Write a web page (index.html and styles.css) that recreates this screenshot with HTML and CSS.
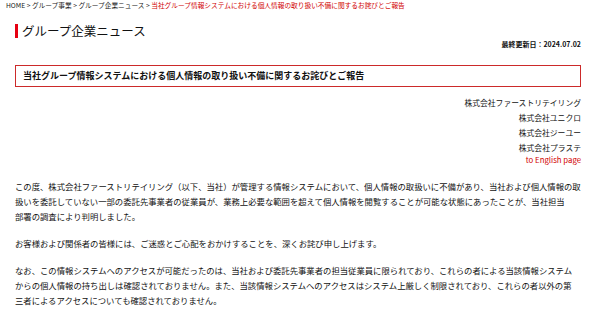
FILE: index.html
```html
<!DOCTYPE html>
<html lang="ja">
<head>
<meta charset="utf-8">
<title>グループ企業ニュース</title>
<link rel="stylesheet" href="styles.css">
</head>
<body>
<div class="breadcrumb">
  <a href="#">HOME</a> &gt; <a href="#">グループ事業</a> &gt; <a href="#">グループ企業ニュース</a> &gt; <span class="current">当社グループ情報システムにおける個人情報の取り扱い不備に関するお詫びとご報告</span>
</div>
<main class="page">
  <h1 class="title">グループ企業ニュース</h1>
  <p class="updated">最終更新日：2024.07.02</p>
  <h2 class="notice">当社グループ情報システムにおける個人情報の取り扱い不備に関するお詫びとご報告</h2>
  <ul class="companies">
    <li>株式会社ファーストリテイリング</li>
    <li>株式会社ユニクロ</li>
    <li>株式会社ジーユー</li>
    <li>株式会社プラステ</li>
  </ul>
  <p class="english"><a href="#">to English page</a></p>
  <div class="body">
    <p>この度、株式会社ファーストリテイリング（以下、当社）が管理する情報システムにおいて、個人情報の取扱いに不備があり、当社および個人情報の取<br>扱いを委託していない一部の委託先事業者の従業員が、業務上必要な範囲を超えて個人情報を閲覧することが可能な状態にあったことが、当社担当<br>部署の調査により判明しました。</p>
    <p>お客様および関係者の皆様には、ご迷惑とご心配をおかけすることを、深くお詫び申し上げます。</p>
    <p>なお、この情報システムへのアクセスが可能だったのは、当社および委託先事業者の担当従業員に限られており、これらの者による当該情報システム<br>からの個人情報の持ち出しは確認されておりません。また、当該情報システムへのアクセスはシステム上厳しく制限されており、これらの者以外の第<br>三者によるアクセスについても確認されておりません。</p>
  </div>
</main>
</body>
</html>
```
FILE: styles.css
```css
html, body {
  margin: 0;
  padding: 0;
  background: #fff;
}
body {
  font-family: "Noto Sans CJK JP", "Noto Sans", sans-serif;
  color: #111;
}
a {
  color: inherit;
  text-decoration: none;
}
.breadcrumb {
  padding: 0 6px;
  font-size: 6.7px;
  line-height: 10px;
  height: 10px;
  color: #222;
  white-space: nowrap;
}
.breadcrumb .current {
  color: #d10000;
}
.page {
  padding: 0 19px 0 15px;
}
.title {
  margin: 14px 0 0;
  font-size: 12.5px;
  font-weight: normal;
  line-height: 14px;
  border-left: 3px solid #e60012;
  padding-left: 4px;
  color: #111;
}
.updated {
  margin: 2px 0 0;
  text-align: right;
  font-size: 7px;
  line-height: 8px;
  font-weight: bold;
}
.notice {
  margin: 17px 0 0;
  height: 20px;
  border: 1px solid #cc2a2a;
  padding: 0 7px;
  font-size: 9px;
  line-height: 20px;
  font-weight: bold;
}
.companies {
  list-style: none;
  margin: 8px 0 0;
  padding: 0;
  text-align: right;
  font-size: 7.8px;
  line-height: 15px;
}
.english {
  margin: 0;
  text-align: right;
  font-size: 7.8px;
  line-height: 9px;
  color: #d10000;
}
.body {
  margin-top: 15px;
  font-size: 8.35px;
  line-height: 15px;
}
.body p {
  margin: 0 0 12px;
  white-space: nowrap;
}
```
